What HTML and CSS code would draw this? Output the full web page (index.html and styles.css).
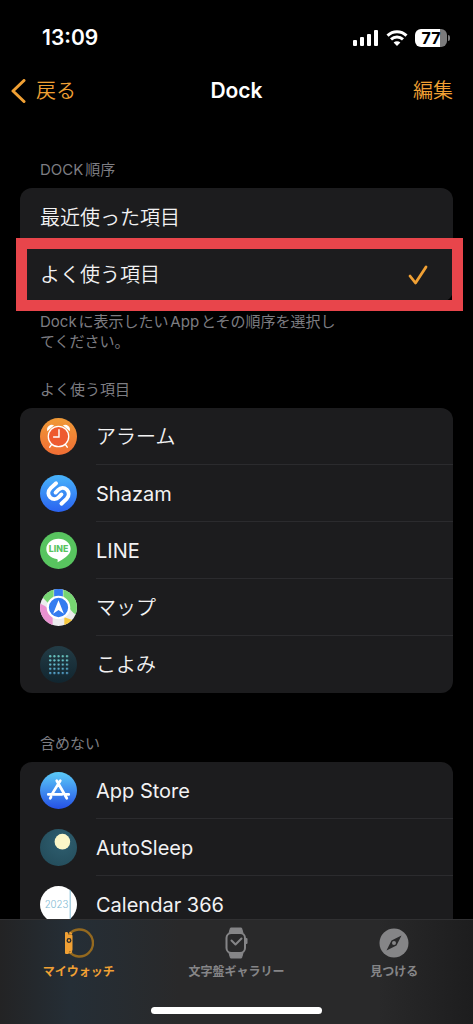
FILE: index.html
```
<!DOCTYPE html>
<html lang="ja">
<head>
    <meta charset="UTF-8">
    <meta name="viewport" content="width=device-width, initial-scale=1.0">
    <title>Dock</title>
    <link rel="stylesheet" href="styles.css">
</head>
<body>
    <div class="status-bar">
        <span class="time">13:09</span>
        <div class="status-icons">
            <svg width="26" height="16" viewBox="0 0 26 16" fill="#fff">
                <rect x="0" y="10" width="4" height="6" rx="1"/>
                <rect x="7" y="7" width="4" height="9" rx="1"/>
                <rect x="14" y="4" width="4" height="12" rx="1"/>
                <rect x="21" y="0" width="4" height="16" rx="1"/>
            </svg>
            <svg width="22" height="16" viewBox="0 0 22 16" fill="none" stroke="#fff" stroke-width="3">
                <path d="M1.500 5.600C7 .4 15 .4 20.500 5.600"/>
                <path d="M5 9.400C8.500 6.200 13.500 6.200 17 9.400"/>
                <path d="M11 16L7.600 12.400C9.500 10.700 12.500 10.700 14.400 12.400Z" fill="#fff" stroke="none"/>
            </svg>
            <div class="battery"><span class="battery-level">77</span></div>
        </div>
    </div>

    <header class="nav-bar">
        <a class="back" href="#">
            <svg width="15" height="24" viewBox="0 0 15 24" fill="none" stroke="currentColor" stroke-width="3" stroke-linecap="round" stroke-linejoin="round">
                <path d="M13 1.500L2 12l11 10.500"/>
            </svg>
            戻る
        </a>
        <h1>Dock</h1>
        <button class="edit" type="button">編集</button>
    </header>

    <main>
        <section class="group">
            <h2 id="order-title">DOCK順序</h2>
            <div class="card" role="radiogroup" aria-labelledby="order-title">
                <label class="option">
                    <input type="radio" name="order" value="recent">
                    <span>最近使った項目</span>
                </label>
                <label class="option highlight">
                    <input type="radio" name="order" value="favorites" checked>
                    <span>よく使う項目</span>
                    <svg class="check" width="20" height="20" viewBox="0 0 20 20" fill="none" stroke="currentColor" stroke-width="2.800" stroke-linecap="round" stroke-linejoin="round">
                        <path d="M2 11l5.500 7L18 2"/>
                    </svg>
                </label>
            </div>
            <p class="note">Dockに表示したいAppとその順序を選択し<br>てください。</p>
        </section>

        <section class="group favorites">
            <h2>よく使う項目</h2>
            <ul class="card">
                <li class="app">
                    <svg class="app-icon" viewBox="0 0 38 38">
                        <defs><linearGradient id="alarm" x2="0" y2="1"><stop stop-color="#f09a37"/><stop offset="1" stop-color="#f06d34"/></linearGradient></defs>
                        <circle cx="19" cy="19" r="19" fill="url(#alarm)"/>
                        <path d="M7.500 13.500a5 5 0 0 1 7-6ZM30.500 13.500a5 5 0 0 0-7-6Z" fill="#fff"/>
                        <circle cx="19" cy="19" r="10.500" fill="#ee5b30" stroke="#fff" stroke-width="1.300"/>
                        <path d="M19.500 12v7.500H14M12 27l-2 3M26 27l2 3" fill="none" stroke="#fff" stroke-width="1.500" stroke-linecap="round"/>
                    </svg>
                    <span class="app-name">アラーム</span>
                </li>
                <li class="app">
                    <svg class="app-icon" viewBox="0 0 38 38">
                        <defs><linearGradient id="shazam" x2="0" y2="1"><stop stop-color="#48b4fb"/><stop offset="1" stop-color="#2a62f0"/></linearGradient></defs>
                        <circle cx="19" cy="19" r="19" fill="url(#shazam)"/>
                        <g fill="none" stroke="#fff" stroke-width="4" stroke-linecap="round">
                            <path d="M16.500 8.500L11 13.500C7.500 17 8.300 20.800 10.500 23C13.200 25.400 16.700 25.300 19.300 22.700L22 20"/>
                            <path d="M22 29.500L27.300 24.500C30.500 21 29.700 17.200 27.500 15C24.800 12.600 21.300 12.700 18.700 15.300L16 18"/>
                        </g>
                    </svg>
                    <span class="app-name" lang="en">Shazam</span>
                </li>
                <li class="app">
                    <svg class="app-icon" viewBox="0 0 38 38">
                        <circle cx="19" cy="19" r="19" fill="#58c45f"/>
                        <path d="M19 7C12 7 6.500 11.500 6.500 17.500c0 5.300 4.500 9.400 10.500 10.300 1.500.3 1.300 1.200 1 3.200 5-2.500 13.500-7 13.500-13.500C31.500 11.500 26 7 19 7Z" fill="#fff"/>
                        <text class="line-logo" x="19" y="21" text-anchor="middle">LINE</text>
                    </svg>
                    <span class="app-name" lang="en">LINE</span>
                </li>
                <li class="app">
                    <svg class="app-icon" viewBox="0 0 38 38">
                        <defs><clipPath id="round"><circle cx="19" cy="19" r="19"/></clipPath></defs>
                        <g clip-path="url(#round)">
                            <path d="M0 0h38v38H0Z" fill="#ececee"/>
                            <path d="M5 0h9v10L8 14 2 8Z" fill="#76d672"/>
                            <path d="M24 0h14v27q-8-4-9-12l-5-6Z" fill="#76d672"/>
                            <path d="M14.500 0h9v9h-9Z" fill="#347cf0"/>
                            <path d="M0 15q10 4 13 13v10H0Z" fill="#e991d0"/>
                            <path d="M25 29l9 3-9 6Z" fill="#f7c83c"/>
                            <circle cx="19" cy="19" r="11" fill="#347cf0" stroke="#fff" stroke-width="2.200"/>
                            <path d="M19 11.500l5.500 14L19 21.500l-5.500 4Z" fill="#fff"/>
                        </g>
                    </svg>
                    <span class="app-name">マップ</span>
                </li>
                <li class="app">
                    <svg class="app-icon" viewBox="0 0 38 38">
                        <defs>
                            <linearGradient id="koyomi" x2="0" y2="1"><stop stop-color="#233c46"/><stop offset="1" stop-color="#11252f"/></linearGradient>
                            <linearGradient id="dot-color" x2="0" y2="1"><stop stop-color="#6fd0c4"/><stop offset="1" stop-color="#57a6d8"/></linearGradient>
                            <pattern id="dots" x="8.500" y="8.500" width="4.300" height="4.300" patternUnits="userSpaceOnUse"><circle cx="2" cy="2" r="1.150" fill="#fff"/></pattern>
                            <mask id="dot-mask"><path d="M8.500 8.500H30V30H8.500Z" fill="url(#dots)"/></mask>
                        </defs>
                        <circle cx="19" cy="19" r="19" fill="url(#koyomi)"/>
                        <path d="M8.500 8.500H30V30H8.500Z" fill="url(#dot-color)" mask="url(#dot-mask)"/>
                    </svg>
                    <span class="app-name">こよみ</span>
                </li>
            </ul>
        </section>

        <section class="group excluded">
            <h2>含めない</h2>
            <ul class="card">
                <li class="app">
                    <svg class="app-icon" viewBox="0 0 38 38">
                        <defs><linearGradient id="store" x2="0" y2="1"><stop stop-color="#5bcbf8"/><stop offset="1" stop-color="#2550e6"/></linearGradient></defs>
                        <circle cx="19" cy="19" r="19" fill="url(#store)"/>
                        <path d="M20.800 9L12.500 22.500M17.200 9L27.500 27M8.500 23H22.500M26.500 23H29.500M11.300 25.700L10.500 27" fill="none" stroke="#fff" stroke-width="2.800" stroke-linecap="round"/>
                    </svg>
                    <span class="app-name" lang="en">App Store</span>
                </li>
                <li class="app">
                    <svg class="app-icon" viewBox="0 0 38 38">
                        <defs><radialGradient id="night" cx=".6" cy=".35" r=".7"><stop stop-color="#2f5f70"/><stop offset="1" stop-color="#244d5c"/></radialGradient></defs>
                        <circle cx="19" cy="19" r="19" fill="url(#night)"/>
                        <circle cx="23" cy="13" r="8" fill="#fcf7c8"/>
                    </svg>
                    <span class="app-name" lang="en">AutoSleep</span>
                </li>
                <li class="app">
                    <svg class="app-icon" viewBox="0 0 38 38">
                        <circle cx="19" cy="19" r="19" fill="#fff"/>
                        <text class="year" x="17" y="23" text-anchor="middle">2023</text>
                        <path d="M31 4V34" stroke="#7fb9d3" stroke-width="1"/>
                    </svg>
                    <span class="app-name" lang="en">Calendar 366</span>
                </li>
            </ul>
        </section>
    </main>

    <footer class="tab-bar">
        <nav>
            <a class="tab active" href="#">
                <svg width="30" height="32" viewBox="0 0 30 32">
                    <path d="M5 7.500A13.500 13.500 0 1 1 5 24.500" fill="none" stroke="#94691f" stroke-width="2.400"/>
                    <path d="M1 6Q1 5 2 5H3.500L4.500 7.500H7.500Q8.500 7.500 8.500 9V22.500Q8.500 24 7.500 24H5.500L4.500 27H2Q1 27 1 26Z" fill="#f0a034"/>
                    <path d="M5.500 5.500L8 7M5.500 26L8 24.500" stroke="#f0a034" stroke-width="1.500"/>
                    <circle cx="5" cy="13.500" r="1.800" fill="#f0a034" stroke="#2b2b2c" stroke-width="1.300"/>
                </svg>
                <span>マイウォッチ</span>
            </a>
            <a class="tab" href="#">
                <svg width="24" height="32" viewBox="0 0 24 32">
                    <path d="M6.500 1H17.500L19 6H5ZM5 26H19L17.500 31H6.500Z" fill="#858587" stroke="#858587" stroke-linejoin="round"/>
                    <rect x="2.500" y="6" width="18.500" height="20" rx="5" fill="#29292a" stroke="#858587" stroke-width="2"/>
                    <path d="M22.500 12v4M7.500 13.500l4 4 6-6" fill="none" stroke="#858587" stroke-width="2" stroke-linecap="round" stroke-linejoin="round"/>
                </svg>
                <span>文字盤ギャラリー</span>
            </a>
            <a class="tab" href="#">
                <svg width="30" height="32" viewBox="0 0 30 32">
                    <circle cx="15" cy="16" r="14.500" fill="#858587"/>
                    <path d="M22.500 8.500L17.500 18.500 7.500 23.500 12.500 13.500Z" fill="#29292a"/>
                    <circle cx="15" cy="16" r="2" fill="#858587"/>
                </svg>
                <span>見つける</span>
            </a>
        </nav>
        <div class="home-indicator"></div>
    </footer>
</body>
</html>
```
FILE: styles.css
```
*{
    box-sizing: border-box;
}
body{
    display: flex;
    flex-direction: column;
    height: 100vh;
    margin: 0;
    overflow: hidden;
    background-color: #000;
    color: #f2f2f3;
    font-family: Inter, "Noto Sans CJK JP", sans-serif;
    font-size: 20px;
    font-weight: 350;
    line-height: 24px;
    text-autospace: normal;
}
h1, h2, p, ul{
    margin: 0;
    padding: 0;
}
a{
    color: inherit;
    text-decoration: none;
}

.status-bar{
    display: flex;
    justify-content: space-between;
    align-items: center;
    padding: 26px 26px 0 42px;
}
.time{
    color: #fff;
    font-size: 21px;
    font-weight: 600;
}
.status-icons{
    display: flex;
    align-items: center;
    gap: 7px;
}
.battery{
    position: relative;
    width: 32px;
    height: 18px;
    border-radius: 6px;
    background: linear-gradient(90deg, #fff 77%, #7b7b7c 77%);
    color: #000;
    font-size: 16px;
    font-weight: 700;
    line-height: 18px;
    text-align: center;
}
.battery::after{
    content: "";
    position: absolute;
    top: 6px;
    right: -3px;
    width: 2px;
    height: 6px;
    border-radius: 0 2px 2px 0;
    background-color: #7b7b7c;
}

.nav-bar{
    display: grid;
    grid-template-columns: 1fr auto 1fr;
    align-items: center;
    padding: 29px 20px 0;
}
.back{
    display: flex;
    align-items: center;
    gap: 10px;
    margin-left: -9px;
    color: #f0a034;
}
h1{
    color: #fff;
    font-size: 21px;
    font-weight: 600;
}
.edit{
    justify-self: end;
    padding: 0;
    border: 0;
    background: none;
    color: #f0a034;
    font: inherit;
}

main{
    flex: 1;
    min-height: 0;
    overflow: hidden;
    padding: 57px 20px 0;
}
h2{
    padding: 0 20px 8px;
    color: #7d7d82;
    font-size: 15px;
    font-weight: 400;
    line-height: 20px;
}
.favorites{
    margin-top: 28px;
}
.excluded{
    margin-top: 41px;
}
.card{
    border-radius: 12px;
    background-color: #1c1c1e;
    list-style: none;
}
.option{
    display: flex;
    justify-content: space-between;
    align-items: center;
    height: 57px;
    padding: 2px 25px 0 20px;
}
.option input{
    position: absolute;
    opacity: 0;
}
.check{
    color: #f0a034;
}
.highlight{
    position: relative;
}
.highlight::after{
    content: "";
    position: absolute;
    top: -7px;
    right: -10px;
    bottom: -9px;
    left: -4px;
    border: 11px solid #e8454b;
}
.note{
    padding: 10px 20px 0;
    color: #7d7d82;
    font-size: 15px;
    font-weight: 400;
    line-height: 20px;
}
.app{
    display: flex;
    align-items: center;
    gap: 19px;
    height: 57px;
    padding-left: 20px;
}
.app-icon{
    flex: none;
    width: 37px;
    height: 37px;
}
.app-name{
    flex: 1;
    align-self: stretch;
    border-bottom: 1px solid #2b2b2e;
    line-height: 58px;
}
.app-name:lang(en){
    font-weight: 400;
}
.app:last-child .app-name{
    border-bottom: 0;
}
.line-logo{
    fill: #58c45f;
    font-size: 9px;
    font-weight: 800;
}
.year{
    fill: #7fb9d3;
    font-size: 10px;
}

.tab-bar{
    height: 105px;
    padding-top: 7px;
    border-top: 1px solid #303032;
    background: linear-gradient(90deg, #232324, #252e36 15%, #29292a 38%, #29292a 80%, #1d1d1e);
}
nav{
    display: grid;
    grid-template-columns: repeat(3, 1fr);
}
.tab{
    display: flex;
    flex-direction: column;
    align-items: center;
    gap: 4px;
    color: #858587;
    font-size: 12px;
    font-weight: 600;
    line-height: 18px;
}
.active{
    color: #f0a034;
}
.home-indicator{
    width: 36%;
    height: 7px;
    margin: 26px auto 0;
    border-radius: 4px;
    background-color: #fff;
}
```
